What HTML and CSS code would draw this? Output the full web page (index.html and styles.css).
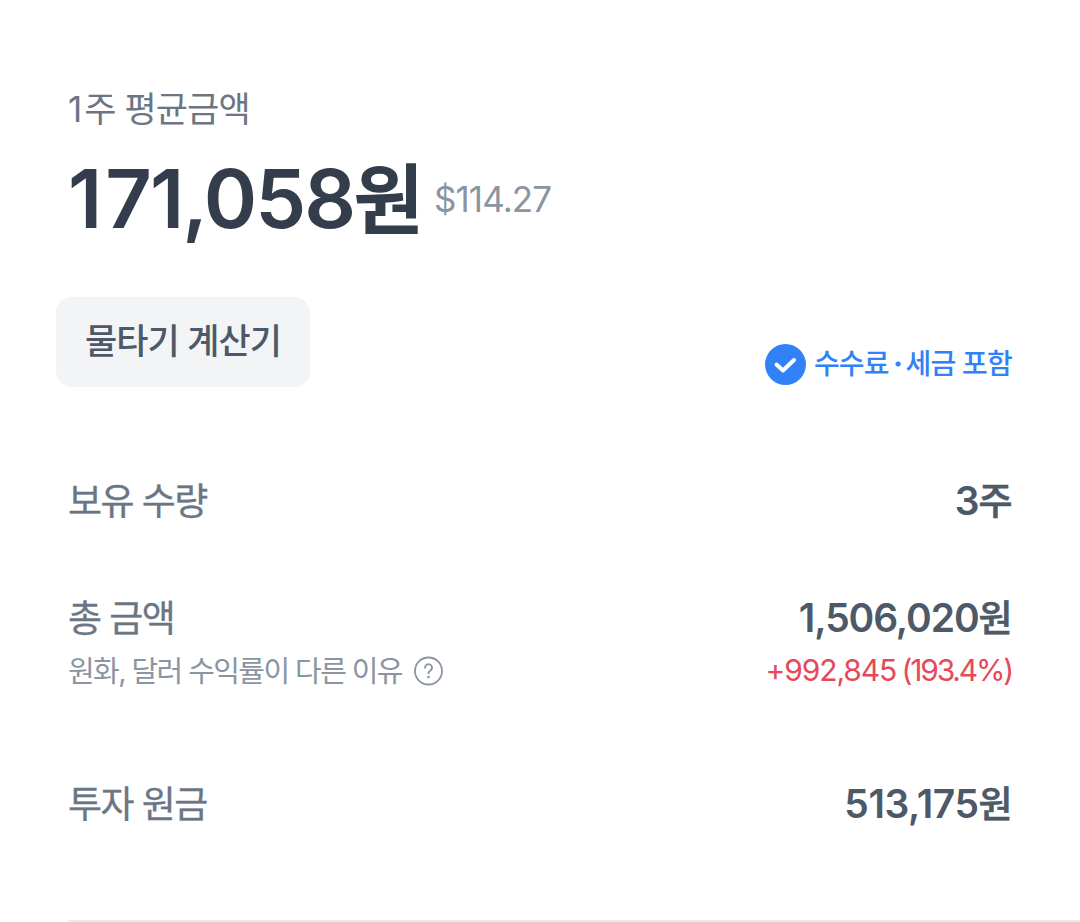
FILE: index.html
```html
<!DOCTYPE html>

<html lang="ko">

	<head>

		<meta charset="utf-8">
		<title>1주 평균금액</title>
		<link rel="stylesheet" href="styles.css">

	</head>

	<body>

		<main>

			<div class="title"><span class="one">1</span>주 평균금액</div>

			<div class="price">
				<span class="won"><span class="lead">1</span><span class="num">71,058</span><span class="unit">원</span></span>
				<span class="usd">$114.27</span>
			</div>

			<section class="tools">
				<button type="button">물타기 계산기</button>
				<div class="fee">
					<svg width="42" height="42" viewBox="0 0 42 42">
						<circle cx="21.5" cy="21.5" r="20.5" fill="#3182f6" />
						<path d="M12.500 21.500l6.500 6L30 17" fill="none" stroke="#fff" stroke-width="4" stroke-linecap="round" stroke-linejoin="round" />
					</svg>
					<span>수수료<span class="dot">·</span>세금 포함</span>
				</div>
			</section>

			<section class="row amount">
				<div class="label">보유 수량</div>
				<div class="value"><span class="num">3</span><span class="unit">주</span></div>
			</section>

			<section class="row total">
				<div class="label">총 금액</div>
				<div class="value"><span class="num">1,506,020</span><span class="unit">원</span></div>
			</section>

			<section class="row sub">
				<div class="reason">
					<span>원화, 달러 수익률이 다른 이유</span>
					<svg width="30" height="30" viewBox="0 0 30 30">
						<circle cx="14.500" cy="15" r="13.500" fill="none" stroke="#8b95a1" stroke-width="1.800" />
						<path d="M11 11.800a3.500 3.500 0 1 1 5.500 2.700c-1.400.9-2 1.300-2 2.700" fill="none" stroke="#8b95a1" stroke-width="1.900" stroke-linecap="round" />
						<circle cx="14.500" cy="21" r="1.300" fill="#8b95a1" />
					</svg>
				</div>
				<div class="profit">+992,845 <span class="rate">(193.4%)</span></div>
			</section>

			<section class="row principal">
				<div class="label">투자 원금</div>
				<div class="value"><span class="num">513,175</span><span class="unit">원</span></div>
			</section>

			<hr>

		</main>

	</body>

</html>
```
FILE: styles.css
```css
* { box-sizing:border-box; }
body { margin:0; background-color:white; font-family:Inter, "Noto Sans CJK KR", sans-serif; overflow:hidden; }
main { height:922px; padding:84px 0 0 68px; white-space:nowrap; }
svg { display:block; flex:none; }

.title { height:50px; line-height:50px; font-size:35px; letter-spacing:-0.9px; color:#6b7684; }
.one { letter-spacing:2px; }

.price { display:flex; height:130px; gap:12px; align-items:center; color:#333d4b; }
.won { font-size:81px; font-weight:600; letter-spacing:-2px; line-height:130px; }
.lead { letter-spacing:3px; }
.usd { font-size:35px; letter-spacing:-0.9px; color:#8b95a1; }
.unit { font-weight:500; -webkit-text-stroke:0.6px currentColor; }
.won .unit { font-size:76px; letter-spacing:-2px; -webkit-text-stroke:2px currentColor; }

.tools { display:flex; justify-content:space-between; height:90px; margin:33px 68px 0 -12px; }
button { width:254px; height:90px; padding:0 0 8px; border:0; border-radius:16px; background-color:#f2f4f6; color:#4e5968; font-family:inherit; font-size:35px; font-weight:500; letter-spacing:-0.9px; }
.fee { display:flex; align-items:center; align-self:flex-end; gap:8px; height:46px; color:#3182f6; font-size:28px; font-weight:500; letter-spacing:-0.8px; }
.fee > span { padding-bottom:4px; }
.dot { margin:0 4px 0 5px; -webkit-text-stroke:1px currentColor; }

.row { display:flex; justify-content:space-between; align-items:center; margin-right:68px; }
.label { padding-bottom:4px; font-size:37px; letter-spacing:-1.6px; color:#6b7684; -webkit-text-stroke:0.3px currentColor; }
.value { padding-bottom:5px; font-size:39px; font-weight:600; letter-spacing:-1.1px; color:#4e5968; }
.value .unit { font-size:37px; letter-spacing:-0.6px; }
.amount { height:60px; margin-top:84px; }
.total { height:60px; margin-top:57px; }
.sub { height:44px; color:#8b95a1; font-size:29px; }
.reason { display:flex; align-items:center; gap:12px; letter-spacing:-1.6px; }
.reason span { padding-bottom:2px; }
.reason svg { margin-top:2px; }
.profit { font-size:30px; letter-spacing:-1.1px; word-spacing:-2px; color:#e5495a; }
.rate { letter-spacing:-2.2px; }
.principal { height:60px; margin-top:82px; }
.principal .num { letter-spacing:-0.4px; }
hr { margin:86px 0 0; border:0; border-top:2px solid #e9ebee; }
```
